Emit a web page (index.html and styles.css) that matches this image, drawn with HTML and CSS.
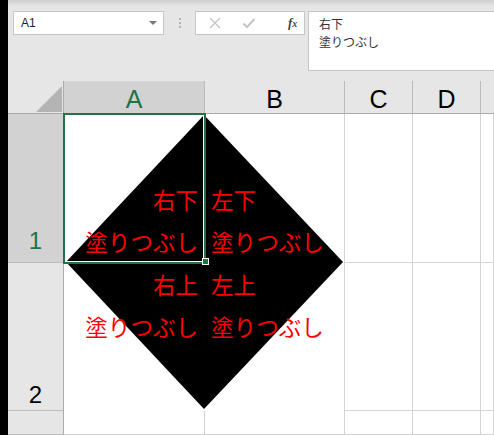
FILE: index.html
```html
<!DOCTYPE html>
<html lang="ja">
<head>
<meta charset="utf-8">
<link rel="stylesheet" href="styles.css">
</head>
<body>
<div class="app">
  <div class="leftbar"></div>
  <div class="main">
    <div class="toolbar">
      <div class="namebox">
        <span class="nb-text">A1</span>
        <span class="nb-arrow"></span>
      </div>
      <div class="dots"><i></i><i></i><i></i></div>
      <div class="btnbox">
        <svg class="ico" width="14" height="14" viewBox="0 0 14 14"><path d="M2 2 L12 12 M12 2 L2 12" stroke="#c4c4c4" stroke-width="1.4" fill="none"/></svg>
        <svg class="ico" width="14" height="14" viewBox="0 0 14 14"><path d="M1.5 7.5 L5 11 L12.5 3" stroke="#c4c4c4" stroke-width="2" fill="none"/></svg>
        <span class="fx">f<small>x</small></span>
      </div>
      <div class="formula"><div class="fl">右下</div><div class="fl">塗りつぶし</div></div>
    </div>
    <div class="sheet">
      <div class="corner"><span class="tri"></span></div>
      <div class="colh sel">A</div>
      <div class="colh">B</div>
      <div class="colh">C</div>
      <div class="colh">D</div>
      <div class="colh last"></div>

      <div class="rowh sel r1">1</div>
      <div class="cell a1"><span class="txt">右下</span><span class="txt">塗りつぶし</span></div>
      <div class="cell b1"><span class="txt">左下</span><span class="txt">塗りつぶし</span></div>
      <div class="cell"></div>
      <div class="cell"></div>
      <div class="cell"></div>

      <div class="rowh r2">2</div>
      <div class="cell a2"><span class="txt">右上</span><span class="txt">塗りつぶし</span></div>
      <div class="cell b2"><span class="txt">左上</span><span class="txt">塗りつぶし</span></div>
      <div class="cell"></div>
      <div class="cell"></div>
      <div class="cell"></div>

      <div class="rowh"></div>
      <div class="cell"></div>
      <div class="cell"></div>
      <div class="cell"></div>
      <div class="cell"></div>
      <div class="cell"></div>

      <svg class="picture" width="280" height="297" viewBox="0 0 280 297">
        <rect x="0" y="0" width="280" height="297" fill="#fff"/>
        <polygon points="140,1 279,148 140,295 2,148" fill="#000"/>
      </svg>
      <div class="selection"></div>
      <div class="handle"></div>
    </div>
  </div>
</div>
</body>
</html>
```
FILE: styles.css
```css
* { box-sizing: border-box; }
html, body { margin: 0; padding: 0; }
body {
  width: 494px;
  height: 435px;
  overflow: hidden;
  background: #fff;
  font-family: "Liberation Sans", Arial, sans-serif;
}
.app { display: flex; height: 435px; }
.leftbar { width: 8px; background: #000; flex: none; }
.main { flex: 1; display: flex; flex-direction: column; min-width: 0; }

.toolbar {
  height: 81px;
  flex: none;
  background: linear-gradient(#cfcfcf 0px, #e6e6e6 6px, #e6e6e6 100%);
  display: flex;
  align-items: flex-start;
  padding-top: 11px;
  padding-left: 5px;
}
.namebox {
  width: 151px;
  height: 24px;
  background: #fff;
  border: 1px solid #c6c6c6;
  display: flex;
  align-items: center;
  justify-content: space-between;
  padding: 0 6px 0 7px;
}
.nb-text { font-size: 12px; color: #222; }
.nb-arrow {
  width: 0; height: 0;
  border-left: 4px solid transparent;
  border-right: 4px solid transparent;
  border-top: 4px solid #777;
}
.dots {
  width: 31px;
  height: 24px;
  display: flex;
  flex-direction: column;
  align-items: center;
  justify-content: center;
  gap: 2px;
}
.dots i { display: block; width: 2px; height: 2px; background: #b3b3b3; }
.btnbox {
  width: 110px;
  height: 24px;
  background: #fff;
  border: 1px solid #c6c6c6;
  display: flex;
  align-items: center;
  padding-left: 12px;
  gap: 20px;
}
.fx {
  font-family: "Liberation Serif", "Times New Roman", serif;
  font-style: italic;
  font-weight: bold;
  font-size: 13px;
  color: #444;
  margin-left: 12px;
}
.fx small { font-size: 10px; }
.formula {
  margin-left: 3px;
  flex: 1;
  height: 60px;
  background: #fff;
  border: 1px solid #c6c6c6;
  border-right: none;
  padding: 3px 0 0 10px;
  font-family: "Noto Sans CJK JP", sans-serif;
  font-size: 12px;
  color: #333;
}
.fl { height: 18px; line-height: 18px; }

.sheet {
  position: relative;
  flex: 1;
  display: grid;
  grid-template-columns: 56px 141px 140px 68px 68px 1fr;
  grid-template-rows: 33px 149px 148px 1fr;
  background: #fff;
}
.corner {
  background: #e6e6e6;
  border-right: 1px solid #ababab;
  border-bottom: 1px solid #ababab;
  position: relative;
}
.tri {
  position: absolute;
  right: 1px;
  bottom: 1px;
  width: 0; height: 0;
  border-left: 26px solid transparent;
  border-bottom: 26px solid #b4b4b4;
}
.colh {
  background: #e6e6e6;
  border-right: 1px solid #bcbcbc;
  border-bottom: 1px solid #ababab;
  font-size: 25px;
  color: #000;
  text-align: center;
  line-height: 30px;
  padding-top: 3px;
}
.colh.last { border-right: none; }
.colh.sel { background: #d2d2d2; color: #217346; }
.rowh {
  background: #e6e6e6;
  border-right: 1px solid #ababab;
  border-bottom: 1px solid #bcbcbc;
  font-size: 24px;
  line-height: 28px;
  text-align: center;
  display: flex;
  align-items: flex-end;
  justify-content: center;
}
.rowh.sel { background: #d2d2d2; color: #217346; }
.rowh.r1 { padding-bottom: 7px; }
.rowh.r2 { padding-bottom: 1px; }
.cell {
  border-right: 1px solid #d4d4d4;
  border-bottom: 1px solid #d4d4d4;
  display: flex;
  flex-direction: column;
  font-family: "Noto Sans CJK JP", sans-serif;
  font-size: 22.5px;
  line-height: 42px;
  color: #ff0000;
}
.txt { position: relative; z-index: 3; white-space: nowrap; }
.a1 { justify-content: flex-end; align-items: flex-end; padding-right: 6px; }
.b1 { justify-content: flex-end; align-items: flex-start; padding-left: 6px; }
.a2 { justify-content: flex-start; align-items: flex-end; padding-right: 6px; }
.b2 { justify-content: flex-start; align-items: flex-start; padding-left: 6px; }

.picture {
  position: absolute;
  left: 56px;
  top: 33px;
  z-index: 1;
}
.selection {
  position: absolute;
  left: 55px;
  top: 32px;
  width: 143px;
  height: 151px;
  border: 2px solid #217346;
  box-shadow: inset 0 0 0 1px #fff;
  z-index: 2;
}
.handle {
  position: absolute;
  left: 194px;
  top: 177px;
  width: 7px;
  height: 7px;
  background: #217346;
  border: 1px solid #fff;
  z-index: 4;
}
```
